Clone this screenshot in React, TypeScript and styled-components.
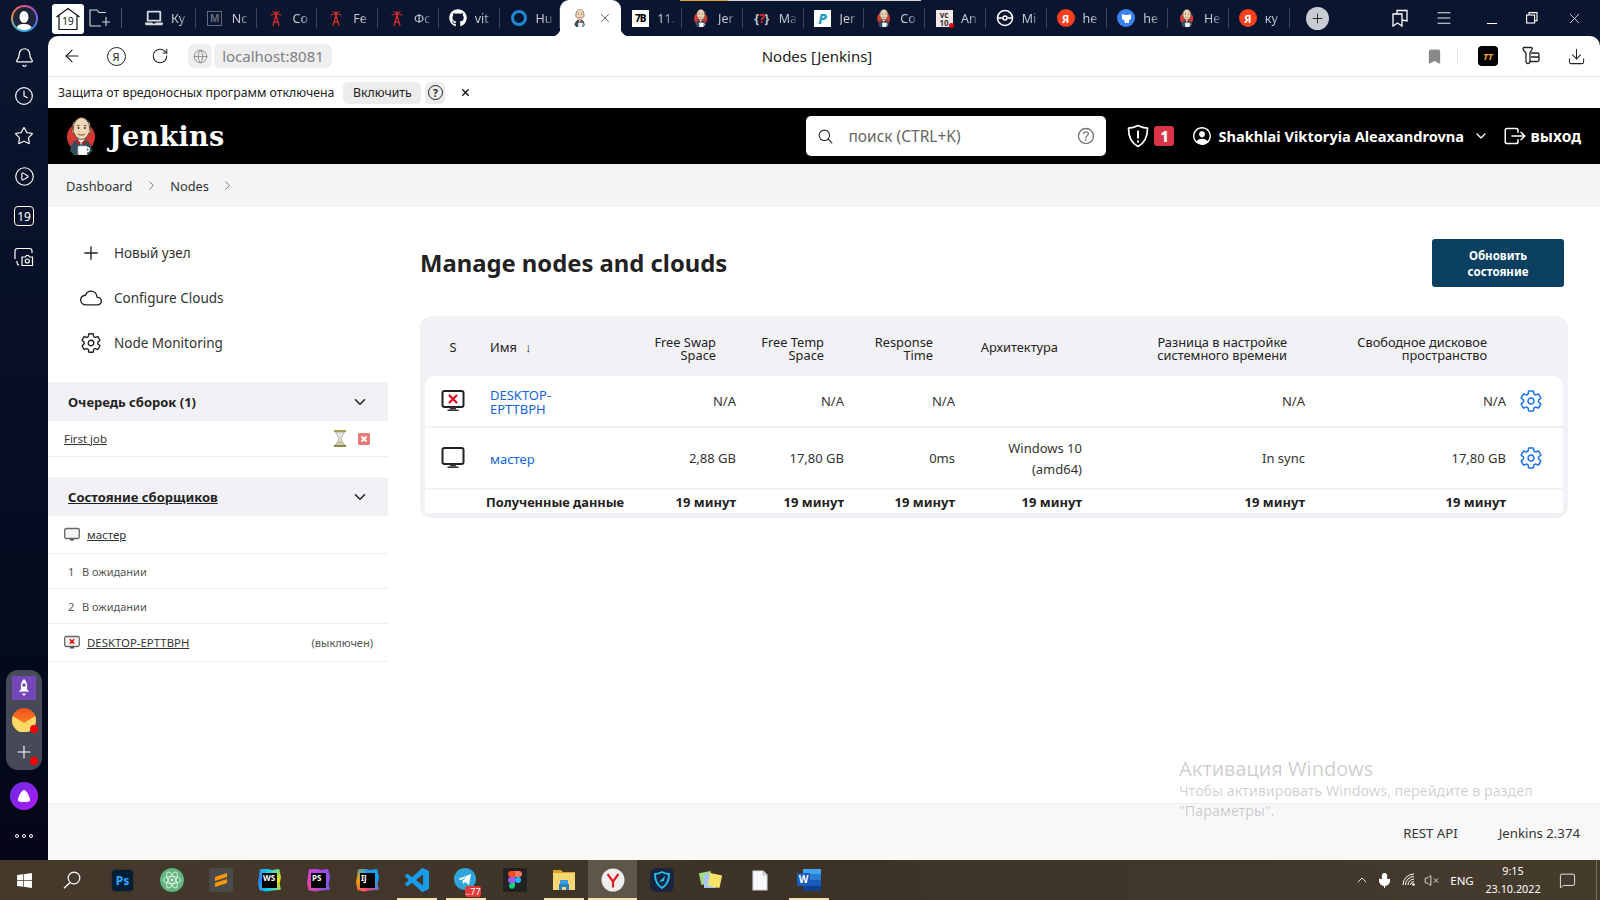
import React from 'react';
import styled, { createGlobalStyle } from 'styled-components';
import { Bell, Clock, Star, CirclePlay, ArrowLeft, RotateCw, Globe, Bookmark, Download, X, Menu, Plus, ChevronRight, ChevronUp, Mic, VolumeX, MessageSquare } from 'lucide-react';
import { IoAddOutline, IoCloudOutline, IoSettingsOutline, IoChevronDownOutline, IoSearchOutline, IoHelpCircleOutline, IoPersonCircleOutline, IoExitOutline } from 'react-icons/io5';
import { FaGithub, FaLaptop, FaWindows } from 'react-icons/fa';

const FONT = `"Noto Sans", "Liberation Sans", sans-serif`;

const Global = createGlobalStyle`
  html, body { margin: 0; padding: 0; width: 1600px; height: 900px; overflow: hidden; background: #fff; }
  body { font-family: ${FONT}; color: #333; }
  * { box-sizing: border-box; }
`;

const Screen = styled.div`position: relative; width: 1600px; height: 900px; display: grid; grid-template-rows: 860px 40px; overflow: hidden;`;
const Desktop = styled.div`display: flex; min-height: 0; background: #0a1630;`;
const Rail = styled.aside`width: 48px; flex: none; display: flex; flex-direction: column; align-items: center; color: #fff; background: linear-gradient(#0a1630, #030718); padding-top: 5px;`;
const Avatar = styled.div`width: 27px; height: 27px; margin-bottom: 2px; border-radius: 50%; background: conic-gradient(#e0508c, #8c5ae6, #2f8fe8, #40c0e0, #e88a3a, #e0508c); padding: 2px;`;
const AvatarInner = styled.div`width: 100%; height: 100%; border-radius: 50%; background: #1d2638; display: flex; align-items: flex-end; justify-content: center; overflow: hidden;`;
const RailSlot = styled.div<{ $h: number }>`height: ${p => p.$h}px; width: 48px; display: flex; align-items: center; justify-content: center;`;
const Cal = styled.div`width: 20px; height: 20px; border: 1.3px solid #fff; border-radius: 4px; font-size: 12px; display: flex; align-items: center; justify-content: center; color: #fff;`;
const Group = styled.div`margin-top: auto; width: 36px; height: 100px; border-radius: 12px; background: #464a56; display: flex; flex-direction: column; align-items: center; padding-top: 6px; gap: 8px;`;
const GroupIcon = styled.div`position: relative; width: 24px; height: 24px; display: flex; align-items: center; justify-content: center;`;
const RedDot = styled.span`position: absolute; right: -2px; bottom: -1px; width: 8px; height: 8px; border-radius: 50%; background: #f00;`;
const Alice = styled.div`margin-top: 12px; width: 28px; height: 28px; border-radius: 50%; background: linear-gradient(135deg, #6a28e0, #b01cf5); display: flex; align-items: center; justify-content: center;`;
const Dots = styled.div`margin: 24px 0 22px; display: flex; gap: 3px;`;
const Dot = styled.span`width: 4px; height: 4px; border: 1px solid #fff; border-radius: 50%;`;

const Column = styled.div`flex: 1; min-width: 0; display: flex; flex-direction: column;`;
const TabStrip = styled.div`position: relative; height: 36px; flex: none; display: flex; align-items: stretch; background: #0a1630; padding: 0 4px; color: #fff;`;
const HomeBox = styled.div`margin-top: 4px; width: 32px; height: 30px; border-radius: 3px; background: #fff; display: flex; align-items: center; justify-content: center; position: relative;`;
const HomeNum = styled.span`position: absolute; top: 10px; left: 0; right: 0; text-align: center; font-size: 10px; color: #111;`;
const FolderSlot = styled.div`margin-left: 5px; width: 22px; display: flex; align-items: center;`;
const StripSep = styled.div`margin: 8px 13px 8px 10px; width: 1px; background: #4a5266;`;
const Tab = styled.div<{ $active?: boolean }>`
  position: relative; flex: none; width: ${p => (p.$active ? 61 : 60.75)}px; display: flex; align-items: center; padding-left: 10px; gap: ${p => (p.$active ? 10 : 8)}px;
  border-right: none; background: ${p => (p.$active ? '#fff' : 'transparent')}; border-radius: ${p => (p.$active ? '9px 9px 0 0' : 0)}; z-index: ${p => (p.$active ? 1 : 0)};
  ${p => (p.$active ? `
    &::before, &::after { content: ''; position: absolute; bottom: 0; width: 8px; height: 8px; }
    &::before { left: -8px; background: radial-gradient(circle at 0 0, transparent 8px, #fff 8.5px); }
    &::after { right: -8px; background: radial-gradient(circle at 100% 0, transparent 8px, #fff 8.5px); }
  ` : `
    &::after { content: ''; position: absolute; right: 0; top: 8px; bottom: 8px; width: 1px; background: #3d4559; }
  `)}
`;
const TabIcon = styled.div`width: 18px; height: 18px; flex: none; display: flex; align-items: center; justify-content: center; position: relative;`;
const TabLabel = styled.span`font-size: 12.5px; color: #c4c8d0; width: 19px; overflow: hidden; white-space: nowrap; -webkit-mask-image: linear-gradient(90deg, #000 45%, transparent); mask-image: linear-gradient(90deg, #000 45%, transparent);`;
const Progress = styled.div`position: absolute; top: 0; left: 632px; width: 241px; height: 1px; background: linear-gradient(90deg, #e0a030 0 20%, #d8d8d8 20%); z-index: 2;`;
const NewTab = styled.div`align-self: center; margin-left: 16px; width: 23px; height: 23px; border-radius: 50%; background: #c8ccd3; color: #222; display: flex; align-items: center; justify-content: center;`;
const WinControls = styled.div`margin-left: auto; margin-right: 2px; display: flex; align-items: center; height: 36px;`;
const WinBtn = styled.div<{ $ml?: number }>`width: 40px; margin-left: ${p => p.$ml || 0}px; display: flex; justify-content: center; color: #fff;`;
const MinLine = styled.span`display: block; width: 10px; height: 1px; margin-top: 10px; background: #fff;`;

const Browser = styled.div`flex: 1; min-height: 0; display: flex; flex-direction: column; background: #fff; border-radius: 10px 10px 0 0; overflow: hidden;`;
const AddressBar = styled.div`height: 41px; flex: none; display: grid; grid-template-columns: 1fr auto 1fr; align-items: center; padding: 0 28px 0 14px; border-bottom: 1px solid #e4e4e4; color: #222;`;
const BarLeft = styled.div`display: flex; align-items: center;`;
const BarRight = styled.div`display: flex; align-items: center; justify-content: flex-end; margin-right: -14px;`;
const BarIcon = styled.div<{ $ml?: number }>`width: 20px; height: 20px; margin-left: ${p => p.$ml || 0}px; display: flex; align-items: center; justify-content: center; flex: none;`;
const YaCircle = styled.div`width: 19px; height: 19px; border: 1.4px solid #222; border-radius: 50%; font-size: 11px; display: flex; align-items: center; justify-content: center;`;
const GlobeChip = styled.div`margin-left: 18px; width: 24px; height: 24px; border-radius: 6px; background: #efefef; display: flex; align-items: center; justify-content: center; color: #8c8c8c;`;
const UrlChip = styled.div`margin-left: 2px; width: 118px; height: 24px; border-radius: 6px; background: #efefef; font-size: 15px; color: #808080; display: flex; align-items: center; justify-content: center;`;
const PageTitle = styled.div`font-size: 15px; color: #222;`;
const BarSep = styled.div`width: 1px; height: 16px; margin-left: 13px; background: #e8e8e8;`;
const Tt = styled.div`width: 20px; height: 20px; margin-left: 20px; border-radius: 4px; background: #000; color: #f5a623; font-size: 9px; font-weight: 700; font-style: italic; display: flex; align-items: center; justify-content: center;`;

const InfoBar = styled.div`height: 31px; flex: none; display: flex; align-items: center; padding-left: 10px; font-size: 12.3px; color: #222;`;
const InfoBtn = styled.div`margin-left: 9px; width: 78px; height: 22px; background: #ececec; border-radius: 5px; display: flex; align-items: center; justify-content: center;`;
const InfoHelp = styled.div`margin-left: 4px; width: 20px; height: 22px; background: #ececec; border-radius: 5px; display: flex; align-items: center; justify-content: center;`;
const QMark = styled.div`width: 15px; height: 15px; border: 1.3px solid #222; border-radius: 50%; font-size: 10px; font-weight: 700; display: flex; align-items: center; justify-content: center;`;
const InfoClose = styled.div`margin-left: 15px; display: flex; color: #111;`;

const Header = styled.header`height: 56px; flex: none; background: #000; color: #fff; display: flex; align-items: center; padding-left: 19px;`;
const Brand = styled.div`display: flex; align-items: center; gap: 14px;`;
const BrandName = styled.span`font-family: "DejaVu Serif", "Liberation Serif", serif; font-weight: 700; font-size: 27px; letter-spacing: .3px;`;
const SearchBox = styled.div`margin-left: auto; width: 300px; height: 40px; background: #fff; border-radius: 5px; display: flex; align-items: center; padding: 0 9px 0 11px; color: #222;`;
const SearchText = styled.span`margin-left: 14px; font-size: 15.5px; color: #666; flex: 1;`;
const ShieldSlot = styled.div`margin-left: 20px; width: 24px; height: 24px; display: flex; align-items: center; justify-content: center;`;
const Badge = styled.div`margin-left: 4px; width: 20px; height: 20px; background: #dc3545; border-radius: 3px; font-weight: 800; font-size: 15px; display: flex; align-items: center; justify-content: center;`;
const UserName = styled.span`margin-left: 5px; font-size: 14.6px; font-weight: 700; white-space: nowrap;`;
const UserSlot = styled.div`margin-left: 17px; display: flex;`;
const CaretSlot = styled.div`margin-left: 9.5px; display: flex;`;
const ExitSlot = styled.div`margin-left: 15px; display: flex;`;
const ExitText = styled.span`margin: 0 19px 0 4px; font-size: 15.5px; font-weight: 700;`;

const Crumbs = styled.nav`height: 43px; flex: none; background: #f3f4f6; display: flex; align-items: center; padding-left: 18px; font-size: 12.8px; color: #333;`;
const CrumbGap = styled.span`display: flex; margin: 0 11.5px; color: #666;`;
const CrumbGapEnd = styled(CrumbGap)`margin-right: 0;`;

const Body = styled.div`flex: 1; min-height: 0; display: flex;`;
const Side = styled.aside`width: 340px; flex: none; padding-top: 23px;`;
const NavItem = styled.div`height: 45px; display: flex; align-items: center; padding-left: 32px; gap: 12px; font-size: 13.5px; color: #333;`;
const NavIcon = styled.div`width: 22px; height: 22px; display: flex; align-items: center; justify-content: center; color: #222;`;
const PaneHead = styled.div<{ $mt: number }>`margin-top: ${p => p.$mt}px; height: 39px; background: #f2f2f6; display: flex; align-items: center; justify-content: space-between; padding: 0 20px; font-size: 13px; font-weight: 700; color: #222;`;
const PaneLink = styled.span`text-decoration: underline;`;
const PaneRow = styled.div<{ $h: number; $pl?: number }>`height: ${p => p.$h}px; display: flex; align-items: center; padding: 0 15px 0 ${p => p.$pl ?? 16}px; border-bottom: 1px solid #eeeeef; font-size: 11.4px; color: #333;`;
const RowLink = styled.span`text-decoration: underline;`;
const RowIcons = styled.div`margin-left: auto; display: flex; align-items: center; gap: 12px; padding-right: 3px;`;
const Muted = styled.span`margin-left: auto; font-size: 11px; color: #555;`;
const ExecNum = styled.span`width: 14px; font-size: 11px; color: #555;`;
const ExecText = styled.span`font-size: 11px; color: #555;`;
const SmallMon = styled.div`width: 16px; height: 16px; margin-right: 7px; display: flex;`;

const Main = styled.main`flex: 1; min-width: 0; padding: 32px 32px 0;`;
const TitleRow = styled.div`display: flex; align-items: center; justify-content: space-between; height: 48px;`;
const H1 = styled.h1`margin: 0; padding-top: 2px; font-size: 23.8px; font-weight: 700; color: #222; line-height: 1;`;
const Refresh = styled.button`width: 132px; height: 48px; margin-right: 4px; border: 0; border-radius: 3px; background: #0b4061; color: #fff; font-family: inherit; font-weight: 700; font-size: 11.5px; line-height: 16px; padding: 2px 20px 0;`;
const TableWrap = styled.div`margin-top: 29px; background: #f2f2f6; border-radius: 12px; padding: 0 5px 5px;`;
const COLS = '49px 165px 113px 108px 111px 127px 223px 198px 44px';
const HeadRow = styled.div`height: 60px; padding-top: 2px; display: grid; grid-template-columns: ${COLS}; align-items: center; font-size: 12.8px; line-height: 13px; color: #222;`;
const Row = styled.div<{ $h: number; $first?: boolean }>`height: ${p => p.$h}px; margin-bottom: 2px; display: grid; grid-template-columns: ${COLS}; align-items: center; background: #fff; border-radius: ${p => (p.$first ? '10px 10px 2px 2px' : '2px')}; font-size: 13px; color: #333;`;
const FootRow = styled(Row)`margin-bottom: 0; font-weight: 700; color: #222;`;
const HeadCell = styled.div<{ $pr?: number; $pt?: number }>`text-align: right; padding-right: ${p => p.$pr ?? 36}px; padding-top: ${p => p.$pt ?? 4}px;`;
const HeadS = styled.div`text-align: center; padding-left: 7px;`;
const HeadName = styled.div`padding-left: 16px; display: flex; gap: 8px;`;
const Cell = styled.div`text-align: right; padding-right: 16px;`;
const CellDisk = styled(Cell)`padding-right: 13px;`;
const CellIcon = styled.div`display: flex; justify-content: center; padding-left: 7px;`;
const CellGear = styled.div`display: flex; margin-left: 0; color: #1a73e8;`;
const NameLink = styled.div`padding: 3px 0 0 16px; width: 110px; color: #1266d6; line-height: 13.5px; word-break: normal;`;
const Arch = styled(Cell)`line-height: 21px; padding-top: 2px;`;
const FootLabel = styled.div`grid-column: span 2; padding-left: 61px; font-size: 12.8px;`;

const Footer = styled.footer`height: 57px; flex: none; background: #f8f8f8; border-top: 1px solid #f0f0f0; display: flex; align-items: center; justify-content: flex-end; padding-top: 2px; font-size: 13.2px; color: #333; gap: 41px; padding-right: 20px;`;

const Taskbar = styled.div`display: flex; align-items: stretch; background: linear-gradient(90deg, #453a2c, #3c3226 50%, #453b2d); color: #fff;`;
const StartSlot = styled.div`width: 48px; display: flex; align-items: center; justify-content: center;`;
const AppsGap = styled.div`width: 2px;`;
const AppSlot = styled.div<{ $open?: boolean; $active?: boolean }>`
  position: relative; width: 49px; display: flex; align-items: center; justify-content: center; background: ${p => (p.$active ? '#5f564a' : 'transparent')};
  ${p => (p.$open ? `&::after { content: ''; position: absolute; bottom: 0; height: 2px; background: #f8dfb0; left: ${p.$active ? 0 : 4.5}px; right: ${p.$active ? 0 : 4.5}px; }` : '')}
`;
const PsBox = styled.div`width: 21px; height: 21px; border-radius: 4px; background: #001e36; color: #31a8ff; font-size: 12px; font-weight: 700; display: flex; align-items: center; justify-content: center; box-shadow: 0 0 2px #0008;`;
const Jet = styled.div<{ $bg: string }>`width: 23px; height: 23px; clip-path: polygon(8% 4%, 35% 0, 60% 6%, 92% 2%, 100% 38%, 94% 66%, 100% 92%, 62% 96%, 34% 100%, 6% 94%, 0 60%, 5% 30%); background: ${p => p.$bg}; display: flex; align-items: center; justify-content: center;`;
const JetInner = styled.div`width: 15px; height: 15px; background: #000; color: #fff; font-size: 8px; font-weight: 700; line-height: 9px; padding-left: 1px; letter-spacing: 0;`;
const TgBadge = styled.span`position: absolute; right: 9px; bottom: 3px; width: 16px; height: 11px; border-radius: 3px; background: #e53935; font-size: 9px; line-height: 11px; text-align: center; color: #fff;`;
const TrayItem = styled.div<{ $w: number }>`width: ${p => p.$w}px; display: flex; align-items: center; justify-content: center; color: #fff; flex: none;`;
const Tray = styled.div`margin-left: auto; display: flex; align-items: stretch; padding-right: 12px;`;
const Lang = styled(TrayItem)`font-size: 11.5px; padding-left: 2px;`;
const ClockBox = styled(TrayItem)`flex-direction: column; font-size: 10.8px; line-height: 18px;`;
const ShowDesktop = styled.div`position: absolute; right: 3px; bottom: 0; width: 1px; height: 40px; background: #7a7060;`;

const Watermark = styled.div`position: absolute; left: 1179px; top: 755px; width: 380px; color: rgba(0,0,0,.2); pointer-events: none; z-index: 5;`;
const WmTitle = styled.div`font-size: 20px; line-height: 27px;`;
const WmText = styled.div`font-size: 14.3px; line-height: 20px; margin-top: -1px;`;

/* ---------- drawn icons ---------- */
const JenkinsFace = ({ size, ring = true }: { size: number; ring?: boolean }) => (
  <svg width={size * 28 / 38} height={size} viewBox="0 0 28 38">
    {ring && <circle cx="14" cy="20" r="14" fill="#d33833" />}
    <path d="M3 34c1-8 5-12 11-12s10 4 11 12l-4 4H7z" fill="#335061" />
    <path d="M11 22l3 6 4-6z" fill="#f5f5f5" />
    <path d="M10 23l4 3 4-3v5l-4-2-4 2z" fill="#c0201c" />
    <ellipse cx="14.5" cy="11.5" rx="8.3" ry="11" fill="#f0d6b7" stroke="#49372c" strokeWidth=".9" />
    <path d="M6.3 12c-1.6 0-2 3 .3 4.6M22.7 12c1.6 0 2 3-.3 4.6" fill="#f0d6b7" stroke="#49372c" strokeWidth=".8" />
    <path d="M6.5 9c-.5-2 .2-3 1.2-4M22.5 9c.5-2-.2-3-1.2-4" stroke="#8a8378" strokeWidth="1.6" fill="none" />
    <circle cx="11.5" cy="11" r=".9" fill="#222" /><circle cx="18" cy="11" r=".9" fill="#222" />
    <path d="M9.5 9c1-.8 2.5-.8 3.4 0M16.5 9c.8-.8 2.4-.8 3.2 0" stroke="#49372c" strokeWidth=".8" fill="none" />
    <path d="M11 17c2 1.4 5 1.4 7 0" stroke="#7a3f2a" strokeWidth="1" fill="none" />
    <rect x="11" y="29" width="9" height="9" rx="1" fill="#fff" stroke="#ccc" strokeWidth=".5" />
    <path d="M20 30.500c3 0 3 4 0 4" stroke="#fff" strokeWidth="1.400" fill="none" />
  </svg>
);
const Tower = () => (
  <svg width="14" height="18" viewBox="0 0 14 18" fill="none" stroke="#d52b27" strokeWidth="1.300">
    <path d="M4 17L7 6l3 11M5 13h4M6 9h2" /><circle cx="7" cy="4.500" r="1.300" fill="#d52b27" />
    <path d="M3.500 2L5 4M10.500 2L9 4M1.500 6l3-.5M12.500 6l-3-.5" strokeWidth="1" />
  </svg>
);
const YaBadge = styled.div`width: 18px; height: 18px; border-radius: 50%; background: #fc3f1d; color: #fff; font-size: 11px; font-weight: 700; display: flex; align-items: center; justify-content: center;`;
const MBox = styled.div`width: 15px; height: 15px; border: 1.500px solid #666e7e; color: #666e7e; font-size: 10px; font-weight: 700; display: flex; align-items: center; justify-content: center;`;
const Ring = styled.div`width: 16px; height: 16px; border: 3px solid #1e88d2; border-radius: 50%;`;
const PgBox = styled.div`width: 17px; height: 17px; background: #fff; color: #000; font-size: 10px; font-weight: 800; line-height: 17px; text-align: center; letter-spacing: -1px;`;
const Curly = styled.div`color: #c6cad3; font-size: 12px; font-weight: 700; white-space: nowrap;`;
const CurlyQ = styled.span`color: #f02a2a;`;
const PBox = styled.div`width: 17px; height: 17px; background: #fff; color: #1d9bc9; font-size: 14px; font-weight: 800; font-style: italic; line-height: 17px; text-align: center;`;
const VcBox = styled.div`position: relative; width: 17px; height: 17px; background: #f5e6ea; color: #333; font-size: 8px; font-weight: 700; line-height: 8px; text-align: center; padding-top: 1px;`;
const VcDot = styled.span`position: absolute; right: -1px; bottom: -1px; width: 5px; height: 5px; border-radius: 50%; background: #e00;`;

const Target = () => (
  <svg width="18" height="18" viewBox="0 0 18 18" fill="none" stroke="#fff"><circle cx="9" cy="9" r="7.500" strokeWidth="1.600" /><circle cx="9" cy="9" r="2" strokeWidth="1.600" /><path d="M2 9h4M12 9h4" strokeWidth="1.600" /></svg>
);
const BlueCat = () => (
  <svg width="18" height="18" viewBox="0 0 18 18"><circle cx="9" cy="9" r="9" fill="#3b82f6" /><path d="M5 5l3 1h3l3-1v5l-2 1v3H8l-1-3-2-1z" fill="#fff" /></svg>
);

type TabDef = { icon: React.ReactNode; label: string };
const tabsA: TabDef[] = [
  { icon: <FaLaptop size={18} color="#d8dbe2" />, label: 'Ку' },
  { icon: <MBox>M</MBox>, label: 'Nc' },
  { icon: <Tower />, label: 'Co' },
  { icon: <Tower />, label: 'Fe' },
  { icon: <Tower />, label: 'Фс' },
  { icon: <FaGithub size={18} color="#fff" />, label: 'vit' },
  { icon: <Ring />, label: 'Hu' },
];
const tabsB: TabDef[] = [
  { icon: <PgBox>7B</PgBox>, label: '11.' },
  { icon: <JenkinsFace size={18} />, label: 'Jer' },
  { icon: <Curly>{'{'}<CurlyQ>?</CurlyQ>{'}'}</Curly>, label: 'Ma' },
  { icon: <PBox>P</PBox>, label: 'Jer' },
  { icon: <JenkinsFace size={18} />, label: 'Co' },
  { icon: <VcBox>vc<br />10<VcDot /></VcBox>, label: 'An' },
  { icon: <Target />, label: 'Mi' },
  { icon: <YaBadge>Я</YaBadge>, label: 'he' },
  { icon: <BlueCat />, label: 'he' },
  { icon: <JenkinsFace size={18} />, label: 'He' },
  { icon: <YaBadge>Я</YaBadge>, label: 'ку' },
];

const Monitor = ({ bad, size = 24 }: { bad?: boolean; size?: number }) => (
  <svg width={size} height={size} viewBox="0 0 24 24" fill="none">
    <rect x="1.500" y="2" width="21" height="16" rx="2" stroke="#222" strokeWidth="2" fill="#fff" />
    <rect x="9" y="18" width="6" height="2.500" fill="#333" /><rect x="6.500" y="20.500" width="11" height="1.500" fill="#333" />
    {bad && <path d="M8 6l8 8M16 6l-8 8" stroke="#e8001c" strokeWidth="2.200" />}
  </svg>
);
const SmallMonitor = ({ bad }: { bad?: boolean }) => (
  <svg width="16" height="16" viewBox="0 0 16 16" fill="none">
    <rect x=".7" y="1.500" width="14.600" height="10" rx="1.500" stroke="#666" strokeWidth="1.300" fill="#f4f4f4" />
    <rect x="6" y="11.500" width="4" height="2" fill="#555" />
    {bad && <path d="M5.800 4.200l4.400 4.400M10.200 4.200L5.800 8.600" stroke="#e00" strokeWidth="1.500" />}
  </svg>
);
const Hourglass = () => (
  <svg width="12" height="17" viewBox="0 0 12 17"><rect x="0" y="0" width="12" height="2" fill="#a8a24a" /><rect x="0" y="15" width="12" height="2" fill="#8f8a3a" /><path d="M1.500 2h9L6.800 8.500 10.500 15h-9l3.700-6.500z" fill="#e8e8e0" stroke="#888" strokeWidth=".6" /><path d="M3 13.500h6L6 10.500z" fill="#c9b772" /></svg>
);
const RedX = () => (
  <svg width="12" height="12" viewBox="0 0 12 12"><rect width="12" height="12" rx="1.500" fill="#e67a7a" /><path d="M3.500 3.500l5 5M8.500 3.500l-5 5" stroke="#fff" strokeWidth="1.800" /></svg>
);
const Shield = () => (
  <svg width="22" height="24" viewBox="0 0 22 24" fill="none" stroke="#fff" strokeWidth="1.700"><path d="M11 1.500c3 1.700 6 2.500 9.500 2.700 0 8.500-2.300 14.500-9.500 18.300C3.800 18.700 1.500 12.700 1.500 4.200 5 4 8 3.200 11 1.500z" strokeLinejoin="round" /><path d="M11 6.500v8" strokeWidth="2" /><path d="M11 16.500v2" strokeWidth="2" /></svg>
);
const HomeIcon = () => (
  <svg width="26" height="24" viewBox="0 0 26 24" fill="none" stroke="#111" strokeWidth="1.200"><path d="M1.500 10L13 1.500 24.500 10M4 8v14.500h18V8" /></svg>
);
const FolderPlus = () => (
  <svg width="22" height="20" viewBox="0 0 22 20" fill="none" stroke="#d8dbe2" strokeWidth="1.100"><path d="M1 18V2h7l2 2.500h7M1 18h11M17 9v9M13 14h8" /></svg>
);
const Bookmarks = () => (
  <svg width="18" height="18" viewBox="0 0 18 18" fill="none" stroke="#fff" strokeWidth="1.300"><path d="M2 5h9v12l-4.500-3L2 17zM6 5V1.500h10V12l-5-1" /></svg>
);
const Restore = () => (
  <svg width="12" height="12" viewBox="0 0 12 12" fill="none" stroke="#fff" strokeWidth="1.100"><rect x=".6" y="3" width="8" height="8" /><path d="M3 3V.6h8v8H8.500" /></svg>
);
const Puzzle = () => (
  <svg width="20" height="20" viewBox="0 0 20 20" fill="none" stroke="#222" strokeWidth="1.300"><path d="M3 1.500h7c1 0 1.500 1 1 2L9 6.500V15c0 1.500-.8 2.500-2 2.500S5 16.500 5 15V7L2.500 4c-.8-1 -.5-2.500.5-2.500z" /><path d="M10 7h6.500c1 0 1.500.8 1.500 1.500V14c0 1-.7 1.500-1.500 1.500H9M10 11h8" /></svg>
);
const Screenshot = () => (
  <svg width="20" height="20" viewBox="0 0 20 20" fill="none" stroke="#fff" strokeWidth="1.200"><path d="M1 12V4a2.500 2.500 0 0 1 2.500-2.500h12A2.500 2.500 0 0 1 18 4v2" /><path d="M8 18.500h10.500V10h-3l-1-1.500h-2L11.500 10H8z" /><circle cx="13.300" cy="14" r="2" /><path d="M3 14v1.500a3 3 0 0 0 2 2.800" /></svg>
);
const Rocket = () => (
  <svg width="24" height="24" viewBox="0 0 24 24"><rect width="24" height="24" fill="#7446b8" /><path d="M12 3c3 2.500 3.500 6 3 10l2 3-3.500-.5h-3L7 16l2-3c-.5-4 0-7.500 3-10z" fill="#fff" /><circle cx="12" cy="9" r="1.700" fill="#7446b8" /><path d="M10 17.500h4l-2 2.500z" fill="#fff" /></svg>
);
const Mail = () => (
  <svg width="24" height="24" viewBox="0 0 24 24"><defs><linearGradient id="m" x1="0" y1="0" x2="0" y2="1"><stop offset="0" stopColor="#f0501e" /><stop offset="1" stopColor="#ff9a1e" /></linearGradient></defs><circle cx="12" cy="12" r="12" fill="url(#m)" /><path d="M.8 8L12 15l11.200-7c1 2.500 1 5.500.3 8A12 12 0 0 1 .5 16C0 13.500 0 10.500.8 8z" fill="#ffd966" /></svg>
);
const Ps = () => <PsBox>Ps</PsBox>;
const Atom = () => (
  <svg width="24" height="24" viewBox="0 0 24 24" fill="none"><circle cx="12" cy="12" r="12" fill="#5fb57d" /><g stroke="#e8f5ec" strokeWidth=".9"><ellipse cx="12" cy="12" rx="9" ry="3.500" /><ellipse cx="12" cy="12" rx="9" ry="3.500" transform="rotate(60 12 12)" /><ellipse cx="12" cy="12" rx="9" ry="3.500" transform="rotate(120 12 12)" /></g><circle cx="12" cy="12" r="1.400" fill="#e8f5ec" /></svg>
);
const Sublime = () => (
  <svg width="24" height="24" viewBox="0 0 24 24"><rect width="24" height="24" rx="2" fill="#4a4a4a" /><path d="M6 9l12-4v4L6 13zM18 15L6 19v-4l12-4z" fill="#ff9800" /></svg>
);
const VsCode = () => (
  <svg width="24" height="24" viewBox="0 0 24 24"><path fill="#1a9bea" d="M23.150 2.587L18.210.21a1.494 1.494 0 0 0-1.705.29l-9.460 8.630-4.120-3.128a.999.999 0 0 0-1.276.057L.327 7.261A1 1 0 0 0 .326 8.740L3.899 12 .326 15.260a1 1 0 0 0 .001 1.479L1.650 17.940a.999.999 0 0 0 1.276.057l4.120-3.128 9.460 8.630a1.492 1.492 0 0 0 1.704.29l4.942-2.377A1.500 1.500 0 0 0 24 20.060V3.939a1.500 1.500 0 0 0-.850-1.352zm-5.146 14.861L10.826 12l7.178-5.448v10.896z" /></svg>
);
const Telegram = () => (
  <svg width="24" height="24" viewBox="0 0 24 24"><circle cx="11" cy="11" r="11" fill="#2ea6da" /><path d="M4 11l13-5-2 11-4-3-2 2-.5-3.500 5-4.500-6.500 4z" fill="#fff" /></svg>
);
const Figma = () => (
  <svg width="24" height="24" viewBox="0 0 24 24"><rect width="24" height="24" rx="2" fill="#222" /><path d="M8 3h4v6H8a3 3 0 0 1 0-6z" fill="#f24e1e" /><path d="M12 3h4a3 3 0 0 1 0 6h-4z" fill="#ff7262" /><path d="M8 9h4v6H8a3 3 0 0 1 0-6z" fill="#a259ff" /><circle cx="15" cy="12" r="3" fill="#1abcfe" /><path d="M8 15h4v3a3 3 0 1 1-4-3z" fill="#0acf83" /></svg>
);
const Explorer = () => (
  <svg width="24" height="22" viewBox="0 0 24 22"><path d="M1 1h8l2 2h12v4H1z" fill="#d9a520" /><rect x="1" y="4" width="22" height="17" fill="#f7d774" /><path d="M7 21v-6h10v6h-3v-3h-4v3z" fill="#2a7fc4" /><rect x="8" y="11" width="8" height="4" fill="#3a9be0" /></svg>
);
const YandexBrowser = () => (
  <svg width="24" height="24" viewBox="0 0 24 24" fill="none"><circle cx="12" cy="12" r="11.500" fill="#eee" /><path d="M6.500 6L12 13.500V19.500M17.500 6L12 13.500" stroke="#e31c23" strokeWidth="2.200" /></svg>
);
const Guard = () => (
  <svg width="24" height="24" viewBox="0 0 24 24" fill="none"><rect width="24" height="24" rx="6" fill="#1a2340" /><path d="M12 4c2.500 1.300 4.500 2 7 2 0 6.500-2 11-7 14-5-3-7-7.500-7-14 2.500 0 4.500-.7 7-2z" stroke="#1ec8f0" strokeWidth="1.800" /><path d="M9 14l6-6-1 5z" fill="#1ec8f0" /></svg>
);
const Stickies = () => (
  <svg width="24" height="22" viewBox="0 0 24 22"><rect x="1" y="3" width="12" height="12" transform="rotate(-12 7 9)" fill="#a4d98a" /><rect x="5" y="5" width="12" height="14" fill="#a8c8f0" /><rect x="10" y="5" width="12" height="13" transform="rotate(12 16 11)" fill="#fbe36a" /></svg>
);
const FileIcon = () => (
  <svg width="16" height="21" viewBox="0 0 16 21"><path d="M.7.700h10.500l4.100 4.100v15.500H.7z" fill="#f6f7fa" stroke="#9a9a9a" strokeWidth=".8" /><path d="M11 .7v4.300h4.300" fill="#ddd" stroke="#9a9a9a" strokeWidth=".6" /></svg>
);
const Word = () => (
  <svg width="24" height="22" viewBox="0 0 24 22"><rect x="6" y="0" width="18" height="22" rx="1" fill="#2b7cd3" /><rect x="6" y="0" width="18" height="5" fill="#41a5ee" /><rect x="6" y="11" width="18" height="5.500" fill="#185abd" /><rect x="6" y="16.500" width="18" height="5.500" fill="#103f91" /></svg>
);
const WordW = styled.div`position: absolute; left: 13px; top: 13px; width: 13px; height: 13px; background: #185abd; color: #fff; font-size: 10px; font-weight: 700; line-height: 13px; text-align: center; border-radius: 1px;`;
const Magnifier = () => (
  <svg width="18" height="18" viewBox="0 0 18 18" fill="none" stroke="#fff" strokeWidth="1.200"><circle cx="11" cy="7" r="5.800" /><path d="M7 11.500L1 17.200" strokeWidth="1.400" /></svg>
);
const WifiArcs = () => (
  <svg width="14" height="14" viewBox="0 0 14 14" fill="none" stroke="#fff" strokeWidth="1"><path d="M1 12A11 11 0 0 1 12 1M3.500 12A8.500 8.500 0 0 1 12 3.500M6 12a6 6 0 0 1 6-6M8.500 12A3.500 3.500 0 0 1 12 8.500" /><circle cx="11.500" cy="11.500" r="1.300" fill="#fff" stroke="none" /></svg>
);

const rows = [
  { bad: true, name: 'DESKTOP-EPTTBPH', v: ['N/A', 'N/A', 'N/A', '', 'N/A', 'N/A'], h: 50, first: true },
  { bad: false, name: 'мастер', v: ['2,88 GB', '17,80 GB', '0ms', 'ARCH', 'In sync', '17,80 GB'], h: 60, first: false },
];

export default function App() {
  return (
    <Screen>
      <Global />
      <Desktop>
        <Rail>
          <Avatar><AvatarInner><svg width="16" height="20" viewBox="0 0 16 20"><ellipse cx="8" cy="7" rx="4.500" ry="6" fill="#fff" /><path d="M0 20c0-5 4-6 8-6s8 1 8 6z" fill="#fff" /></svg></AvatarInner></Avatar>
          <RailSlot $h={46}><Bell size={21} strokeWidth={1.400} /></RailSlot>
          <RailSlot $h={32}><Clock size={20} strokeWidth={1.400} /></RailSlot>
          <RailSlot $h={48}><Star size={20} strokeWidth={1.400} /></RailSlot>
          <RailSlot $h={32}><CirclePlay size={21} strokeWidth={1.300} /></RailSlot>
          <RailSlot $h={48}><Cal>19</Cal></RailSlot>
          <RailSlot $h={34}><Screenshot /></RailSlot>
          <Group>
            <GroupIcon><Rocket /></GroupIcon>
            <GroupIcon><Mail /><RedDot /></GroupIcon>
            <GroupIcon><Plus size={20} strokeWidth={1.300} /><RedDot /></GroupIcon>
          </Group>
          <Alice><svg width="14" height="14" viewBox="0 0 14 14"><path d="M7 1c2.500 0 6 7 6 10 0 1.500-1.500 2-6 2s-6-.5-6-2c0-3 3.500-10 6-10z" fill="#fff" /></svg></Alice>
          <Dots><Dot /><Dot /><Dot /></Dots>
        </Rail>
        <Column>
          <TabStrip>
            <HomeBox><HomeIcon /><HomeNum>19</HomeNum></HomeBox>
            <FolderSlot><FolderPlus /></FolderSlot>
            <StripSep />
            {tabsA.map((t, i) => (<Tab key={i}><TabIcon>{t.icon}</TabIcon><TabLabel>{t.label}</TabLabel></Tab>))}
            <Tab $active><TabIcon><JenkinsFace size={18} ring={false} /></TabIcon><X size={14} color="#333" strokeWidth={1.300} /></Tab>
            {tabsB.map((t, i) => (<Tab key={i}><TabIcon>{t.icon}</TabIcon><TabLabel>{t.label}</TabLabel></Tab>))}
            <NewTab><Plus size={15} strokeWidth={1.500} /></NewTab>
            <WinControls>
              <WinBtn><Bookmarks /></WinBtn>
              <WinBtn $ml={4}><Menu size={18} strokeWidth={1.200} /></WinBtn>
              <WinBtn $ml={8}><MinLine /></WinBtn>
              <WinBtn><Restore /></WinBtn>
              <WinBtn $ml={2}><X size={17} strokeWidth={1.100} /></WinBtn>
            </WinControls>
            <Progress />
          </TabStrip>
          <Browser>
            <AddressBar>
              <BarLeft>
                <BarIcon><ArrowLeft size={20} strokeWidth={1.400} /></BarIcon>
                <BarIcon $ml={24}><YaCircle>Я</YaCircle></BarIcon>
                <BarIcon $ml={24}><RotateCw size={18} strokeWidth={1.400} /></BarIcon>
                <GlobeChip><Globe size={15} strokeWidth={1.500} /></GlobeChip>
                <UrlChip>localhost:8081</UrlChip>
              </BarLeft>
              <PageTitle>Nodes [Jenkins]</PageTitle>
              <BarRight>
                <BarIcon><Bookmark size={17} fill="#8a8a8a" color="#8a8a8a" /></BarIcon>
                <BarSep />
                <Tt>TT</Tt>
                <BarIcon $ml={23}><Puzzle /></BarIcon>
                <BarIcon $ml={25}><Download size={19} strokeWidth={1.300} /></BarIcon>
              </BarRight>
            </AddressBar>
            <InfoBar>
              Защита от вредоносных программ отключена
              <InfoBtn>Включить</InfoBtn>
              <InfoHelp><QMark>?</QMark></InfoHelp>
              <InfoClose><X size={11} strokeWidth={3} /></InfoClose>
            </InfoBar>
            <Header>
              <Brand><JenkinsFace size={38} /><BrandName>Jenkins</BrandName></Brand>
              <SearchBox>
                <IoSearchOutline size={17} />
                <SearchText>поиск (CTRL+K)</SearchText>
                <IoHelpCircleOutline size={22} color="#777" />
              </SearchBox>
              <ShieldSlot><Shield /></ShieldSlot>
              <Badge>1</Badge>
              <UserSlot><IoPersonCircleOutline size={22} /></UserSlot>
              <UserName>Shakhlai Viktoryia Aleaxandrovna</UserName>
              <CaretSlot><IoChevronDownOutline size={14} /></CaretSlot>
              <ExitSlot><IoExitOutline size={24} /></ExitSlot>
              <ExitText>выход</ExitText>
            </Header>
            <Crumbs>
              Dashboard<CrumbGap><ChevronRight size={15} strokeWidth={1.400} /></CrumbGap>
              Nodes<CrumbGapEnd><ChevronRight size={15} strokeWidth={1.400} /></CrumbGapEnd>
            </Crumbs>
            <Body>
              <Side>
                <NavItem><NavIcon><IoAddOutline size={24} /></NavIcon>Новый узел</NavItem>
                <NavItem><NavIcon><IoCloudOutline size={24} /></NavIcon>Configure Clouds</NavItem>
                <NavItem><NavIcon><IoSettingsOutline size={22} /></NavIcon>Node Monitoring</NavItem>
                <PaneHead $mt={17}>Очередь сборок (1)<IoChevronDownOutline size={16} /></PaneHead>
                <PaneRow $h={36}><RowLink>First job</RowLink><RowIcons><Hourglass /><RedX /></RowIcons></PaneRow>
                <PaneHead $mt={20}><PaneLink>Состояние сборщиков</PaneLink><IoChevronDownOutline size={16} /></PaneHead>
                <PaneRow $h={38}><SmallMon><SmallMonitor /></SmallMon><RowLink>мастер</RowLink></PaneRow>
                <PaneRow $h={35} $pl={20}><ExecNum>1</ExecNum><ExecText>В ожидании</ExecText></PaneRow>
                <PaneRow $h={35} $pl={20}><ExecNum>2</ExecNum><ExecText>В ожидании</ExecText></PaneRow>
                <PaneRow $h={38}><SmallMon><SmallMonitor bad /></SmallMon><RowLink>DESKTOP-EPTTBPH</RowLink><Muted>(выключен)</Muted></PaneRow>
              </Side>
              <Main>
                <TitleRow>
                  <H1>Manage nodes and clouds</H1>
                  <Refresh>Обновить состояние</Refresh>
                </TitleRow>
                <TableWrap>
                  <HeadRow>
                    <HeadS>S</HeadS>
                    <HeadName>Имя<span>↓</span></HeadName>
                    <HeadCell>Free Swap<br />Space</HeadCell>
                    <HeadCell>Free Temp<br />Space</HeadCell>
                    <HeadCell $pr={38}>Response<br />Time</HeadCell>
                    <HeadCell $pr={40} $pt={0}>Архитектура</HeadCell>
                    <HeadCell $pr={34}>Разница в настройке<br />системного времени</HeadCell>
                    <HeadCell $pr={32}>Свободное дисковое<br />пространство</HeadCell>
                    <div />
                  </HeadRow>
                  {rows.map(r => (
                    <Row key={r.name} $h={r.h} $first={r.first}>
                      <CellIcon><Monitor bad={r.bad} /></CellIcon>
                      <NameLink>{r.name}</NameLink>
                      <Cell>{r.v[0]}</Cell>
                      <Cell>{r.v[1]}</Cell>
                      <Cell>{r.v[2]}</Cell>
                      <Arch>{r.v[3] === 'ARCH' ? <>Windows 10<br />(amd64)</> : r.v[3]}</Arch>
                      <Cell>{r.v[4]}</Cell>
                      <CellDisk>{r.v[5]}</CellDisk>
                      <CellGear><IoSettingsOutline size={24} /></CellGear>
                    </Row>
                  ))}
                  <FootRow $h={23}>
                    <FootLabel>Полученные данные</FootLabel>
                    <Cell>19 минут</Cell>
                    <Cell>19 минут</Cell>
                    <Cell>19 минут</Cell>
                    <Cell>19 минут</Cell>
                    <Cell>19 минут</Cell>
                    <CellDisk>19 минут</CellDisk>
                    <div />
                  </FootRow>
                </TableWrap>
              </Main>
            </Body>
            <Footer><span>REST API</span><span>Jenkins 2.374</span></Footer>
          </Browser>
        </Column>
      </Desktop>
      <Taskbar>
        <StartSlot><FaWindows size={17} /></StartSlot>
        <StartSlot><Magnifier /></StartSlot>
        <AppsGap />
        <AppSlot><Ps /></AppSlot>
        <AppSlot><Atom /></AppSlot>
        <AppSlot><Sublime /></AppSlot>
        <AppSlot><Jet $bg="conic-gradient(#17d0f0, #f5e000, #17d0f0, #2e7cf0, #17d0f0)"><JetInner>WS</JetInner></Jet></AppSlot>
        <AppSlot><Jet $bg="conic-gradient(#b245f0, #7a5af0, #f040a8, #b245f0)"><JetInner>PS</JetInner></Jet></AppSlot>
        <AppSlot><Jet $bg="conic-gradient(#17a0f0, #17a0f0, #f0437a, #f5a000, #17a0f0)"><JetInner>IJ</JetInner></Jet></AppSlot>
        <AppSlot $open><VsCode /></AppSlot>
        <AppSlot $open><Telegram /><TgBadge>..77</TgBadge></AppSlot>
        <AppSlot><Figma /></AppSlot>
        <AppSlot $open><Explorer /></AppSlot>
        <AppSlot $open $active><YandexBrowser /></AppSlot>
        <AppSlot><Guard /></AppSlot>
        <AppSlot><Stickies /></AppSlot>
        <AppSlot><FileIcon /></AppSlot>
        <AppSlot $open><Word /><WordW>W</WordW></AppSlot>
        <Tray>
          <TrayItem $w={16}><ChevronUp size={18} strokeWidth={1.300} /></TrayItem>
          <TrayItem $w={28}><Mic size={17} strokeWidth={1.500} fill="#fff" /></TrayItem>
          <TrayItem $w={22}><WifiArcs /></TrayItem>
          <TrayItem $w={22}><VolumeX size={15} strokeWidth={1.300} /></TrayItem>
          <Lang $w={38}>ENG</Lang>
          <ClockBox $w={66}><span>9:15</span><span>23.10.2022</span></ClockBox>
          <TrayItem $w={42}><MessageSquare size={17} strokeWidth={1.200} /></TrayItem>
        </Tray>
        <ShowDesktop />
      </Taskbar>
      <Watermark>
        <WmTitle>Активация Windows</WmTitle>
        <WmText>Чтобы активировать Windows, перейдите в раздел<br />"Параметры".</WmText>
      </Watermark>
    </Screen>
  );
}
